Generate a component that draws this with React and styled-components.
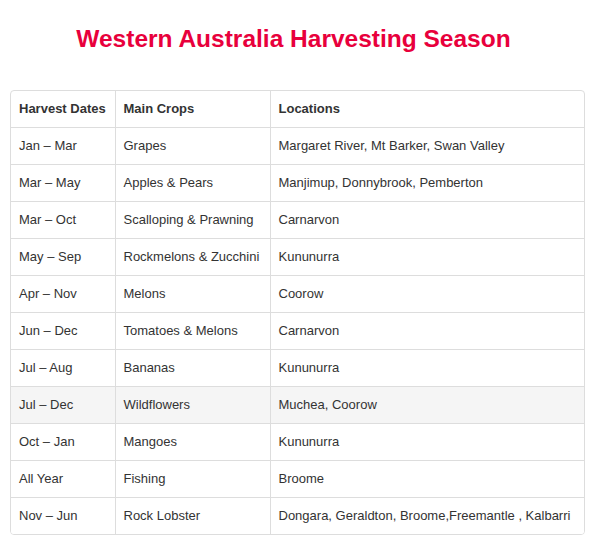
import styled, { createGlobalStyle } from 'styled-components';

const rows = [
    ['Jan – Mar', 'Grapes', 'Margaret River, Mt Barker, Swan Valley'],
    ['Mar – May', 'Apples & Pears', 'Manjimup, Donnybrook, Pemberton'],
    ['Mar – Oct', 'Scalloping & Prawning', 'Carnarvon'],
    ['May – Sep', 'Rockmelons & Zucchini', 'Kununurra'],
    ['Apr – Nov', 'Melons', 'Coorow'],
    ['Jun – Dec', 'Tomatoes & Melons', 'Carnarvon'],
    ['Jul – Aug', 'Bananas', 'Kununurra'],
    ['Jul – Dec', 'Wildflowers', 'Muchea, Coorow'],
    ['Oct – Jan', 'Mangoes', 'Kununurra'],
    ['All Year', 'Fishing', 'Broome'],
    ['Nov – Jun', 'Rock Lobster', 'Dongara, Geraldton, Broome,Freemantle , Kalbarri'],
];

function App() {
    return (
        <Page>
            <GlobalStyle />
            <Title>Western Australia Harvesting Season</Title>
            <TableWrap>
                <Table>
                    <colgroup>
                        <col style={{ width: 104 }} />
                        <col style={{ width: 155 }} />
                        <col />
                    </colgroup>
                    <thead>
                        <tr>
                            <Th>Harvest Dates</Th>
                            <Th>Main Crops</Th>
                            <Th>Locations</Th>
                        </tr>
                    </thead>
                    <tbody>
                        {rows.map((r, i) => (
                            <Row key={i} $hover={r[1] === 'Wildflowers'}>
                                <Td>{r[0]}</Td>
                                <Td>{r[1]}</Td>
                                <Td>{r[2]}</Td>
                            </Row>
                        ))}
                    </tbody>
                </Table>
            </TableWrap>
        </Page>
    )
}

export default App

const GlobalStyle = createGlobalStyle`
body {
    margin: 0;
    background: #fff;
    font-family: "Liberation Sans", Arial, sans-serif;
}
`

const Page = styled.div`
width: 587px;
padding: 23px 0 0 0;
`

const Title = styled.h1`
margin: 0 0 35px 0;
text-align: center;
font-size: 24.5px;
line-height: 32px;
font-weight: bold;
color: #e8003c;
`

const TableWrap = styled.div`
margin: 0 2px 0 10px;
border: 1px solid #ddd;
border-radius: 4px;
overflow: hidden;
`

const Table = styled.table`
width: 100%;
table-layout: fixed;
border-collapse: collapse;
font-size: 13px;
color: #333;
`

const Th = styled.th`
height: 34px;
padding: 0 8px 2px;
text-align: left;
font-weight: bold;
white-space: nowrap;
border-left: 1px solid #ddd;
border-bottom: 1px solid #ddd;
&:first-child { border-left: none; }
`

const Row = styled.tr`
background: ${p => p.$hover ? '#f5f5f5' : '#fff'};
&:last-child td { border-bottom: none; }
`

const Td = styled.td`
height: 34px;
padding: 0 8px 2px;
white-space: nowrap;
border-left: 1px solid #ddd;
border-bottom: 1px solid #ddd;
&:first-child { border-left: none; }
`
